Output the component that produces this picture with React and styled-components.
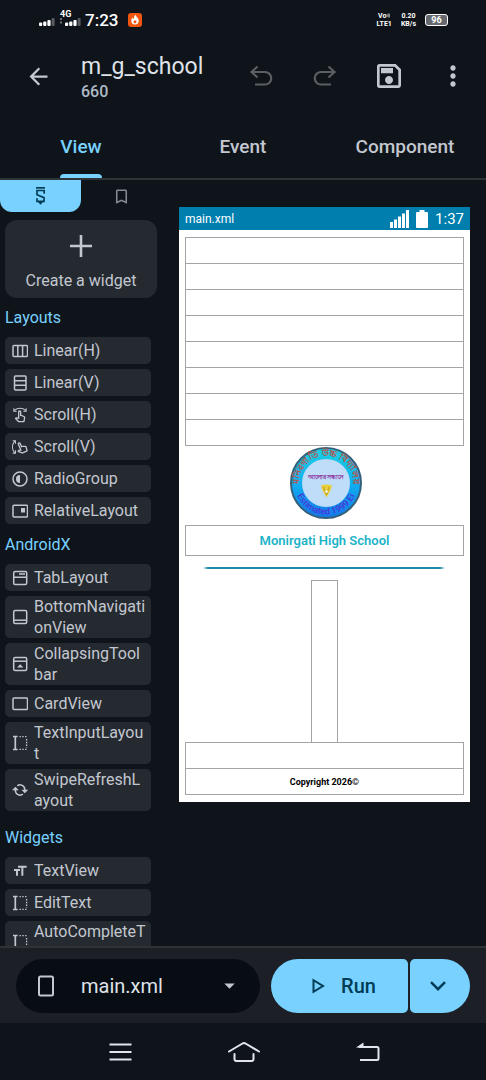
// src/App.jsx
import React, { useState } from 'react';
import styled, { createGlobalStyle, ThemeProvider } from 'styled-components';
import {
  MdArrowBack,
  MdOutlineSave,
  MdMoreVert,
  MdBookmarkBorder,
  MdOutlineSwipe,
  MdOutlineSwipeVertical,
  MdFormatSize,
  MdArrowDropDown,
} from 'react-icons/md';

const theme = {
  background: '#0f141a',
  surface: '#252a31',
  bar: '#1c2026',
  field: '#070d13',
  line: '#2e3338',
  text: '#c3c7cf',
  bright: '#dfe2e8',
  muted: '#5b5f64',
  primary: '#78d1ff',
  onPrimary: '#003c55',
};

const GlobalStyle = createGlobalStyle`
  * {
    box-sizing: border-box;
  }

  body {
    margin: 0;
    background-color: #0f141a;
    font-family: Roboto, 'Liberation Sans', sans-serif;
  }

  button, select {
    font-family: inherit;
    border: none;
    padding: 0;
    margin: 0;
    background: none;
    color: inherit;
    cursor: pointer;
  }

  h1, h2, p {
    margin: 0;
  }

  svg {
    display: block;
    flex-shrink: 0;
  }
`;

const Screen = styled.div`
  display: flex;
  flex-direction: column;
  height: 100vh;
  overflow: hidden;
  background-color: ${({ theme }) => theme.background};
  color: ${({ theme }) => theme.text};
`;

/* Status bar */

const StatusBar = styled.div`
  display: flex;
  align-items: center;
  justify-content: space-between;
  height: 39px;
  padding: 0 38px;
  color: #ffffff;
`;

const StatusGroup = styled.div`
  display: flex;
  align-items: center;
  gap: ${props => props.$gap}px;
`;

const Signals = styled.div`
  display: flex;
  align-items: flex-end;
  gap: 5px;
  padding-bottom: 4px;
`;

const Clock = styled.span`
  margin-right: 6px;
  font-size: 17px;
  font-weight: 500;
`;

const TinyStack = styled.span`
  display: flex;
  flex-direction: column;
  align-items: ${props => props.$align || 'center'};
  font-size: ${props => props.$size || 7}px;
  line-height: 8px;
  font-weight: 700;
`;

const TinyLine = styled.span`
  display: flex;
  align-items: center;
`;

const Battery = styled.span`
  width: 23px;
  height: 12px;
  border: 1px solid #ffffff;
  border-radius: 3px;
  background-color: #66696d;
  font-size: 9px;
  line-height: 10px;
  font-weight: 700;
  text-align: center;
`;

/* App bar */

const AppBar = styled.header`
  display: flex;
  align-items: center;
  height: 74px;
  padding: 0 17px 0 25px;
`;

const TitleBlock = styled.div`
  flex: 1;
  padding: 3px 0 0 29px;
`;

const Title = styled.h1`
  font-size: 23px;
  line-height: 28px;
  font-weight: 400;
  color: ${({ theme }) => theme.bright};
`;

const Subtitle = styled.p`
  font-size: 16px;
  line-height: 22px;
  font-weight: 500;
  color: #aebbc6;
`;

const Actions = styled.div`
  display: flex;
  align-items: center;
  gap: 32px;
`;

const IconButton = styled.button`
  display: flex;
  justify-content: center;
  min-width: ${props => props.$width || 0}px;
  color: ${({ theme, disabled }) => (disabled ? theme.muted : theme.text)};
`;

/* Tabs */

const Tabs = styled.nav`
  display: flex;
  height: 67px;
  border-bottom: 2px solid ${({ theme }) => theme.line};
`;

const Tab = styled.button`
  flex: 1;
  display: flex;
  flex-direction: column;
  align-items: center;
  justify-content: flex-end;
  font-size: 19px;
  line-height: 24px;
  font-weight: 500;
  color: ${({ theme, $active }) => ($active ? theme.primary : theme.text)};

  &::after {
    content: '';
    width: 42px;
    height: 4px;
    margin-top: 15px;
    border-radius: 4px 4px 0 0;
    background-color: ${({ theme, $active }) => ($active ? theme.primary : 'transparent')};
  }
`;

/* Workspace */

const Workspace = styled.main`
  flex: 1;
  display: flex;
  min-height: 0;
`;

const Sidebar = styled.aside`
  flex: 0 0 calc(100% / 3);
  overflow: hidden;
`;

const PaletteTabs = styled.div`
  display: flex;
`;

const PaletteTab = styled.button`
  flex: 1;
  display: flex;
  align-items: center;
  justify-content: center;
  height: 32px;
  border-radius: 0 0 12px 12px;
  background-color: ${({ theme, $active }) => ($active ? theme.primary : 'transparent')};
  color: ${({ theme, $active }) => ($active ? theme.onPrimary : '#858990')};
`;

const CreateButton = styled.button`
  display: flex;
  flex-direction: column;
  align-items: center;
  gap: 14px;
  width: calc(100% - 10px);
  height: 78px;
  margin: 8px 5px 0;
  padding-top: 15px;
  border-radius: 12px;
  background-color: ${({ theme }) => theme.surface};
  font-size: 16px;
  line-height: 20px;
`;

const Section = styled.section`
  display: flex;
  flex-direction: column;
  gap: 5px;
  padding: 0 11px ${props => props.$space}px 5px;
`;

const SectionTitle = styled.h2`
  font-size: 16px;
  line-height: 20px;
  padding: 10px 0 4px;
  font-weight: 400;
  color: ${({ theme }) => theme.primary};
`;

const Item = styled.button`
  display: flex;
  align-items: center;
  gap: 6px;
  min-height: 27px;
  padding: 0 4px 0 7px;
  border-radius: 5px;
  background-color: ${({ theme }) => theme.surface};
  font-size: 16px;
  line-height: 21px;
  text-align: left;
`;

const ItemLabel = styled.span`
  flex: 1;
  word-break: break-all;
`;

/* Layout preview */

const Canvas = styled.div`
  flex: 1;
  padding: 27px 16px 0 17px;
`;

const PreviewBar = styled.div`
  display: flex;
  align-items: center;
  justify-content: space-between;
  height: 23px;
  padding: 0 6px;
  background-color: #007eae;
  color: #ffffff;
  font-size: 12px;
`;

const PreviewClock = styled.span`
  font-size: 15px;
`;

const PreviewBody = styled.div`
  display: flex;
  flex-direction: column;
  align-items: center;
  padding: 7px 6px;
  background-color: #ffffff;
`;

const Cell = styled.div`
  display: flex;
  align-items: center;
  justify-content: center;
  width: ${props => props.$width || '100%'};
  height: ${props => props.$height || 27}px;
  border: 1px solid #a3a3a8;

  & + & {
    margin-top: -1px;
  }
`;

const Crest = styled.div`
  padding: 0 0 5px 4px;
`;

const SchoolName = styled.p`
  font-size: 13px;
  font-weight: 600;
  color: #1cb3c8;
`;

const Divider = styled.div`
  width: 242px;
  height: 2px;
  margin: 11px 0;
  background: linear-gradient(to right, transparent, #1c8ba8 2%, #1c8ba8 98%, transparent);
`;

const Copyright = styled.p`
  font-size: 9px;
  font-weight: 700;
  color: #000000;
`;

/* Bottom bar */

const BottomBar = styled.footer`
  display: flex;
  align-items: center;
  height: 77px;
  padding: 0 16px;
  border-top: 2px solid ${({ theme }) => theme.line};
  background-color: ${({ theme }) => theme.bar};
`;

const FilePicker = styled.label`
  flex: 1;
  display: flex;
  align-items: center;
  height: 54px;
  margin-right: 11px;
  padding: 0 18px 0 22px;
  border-radius: 27px;
  background-color: ${({ theme }) => theme.field};
`;

const FileSelect = styled.select`
  flex: 1;
  min-width: 0;
  margin-left: 27px;
  appearance: none;
  outline: none;
  font-size: 20px;
  color: ${({ theme }) => theme.bright};
`;

const RunButton = styled.button`
  display: flex;
  align-items: center;
  justify-content: center;
  gap: 16px;
  width: 137px;
  height: 54px;
  padding-left: 9px;
  border-radius: 27px 5px 5px 27px;
  background-color: ${({ theme }) => theme.primary};
  color: ${({ theme }) => theme.onPrimary};
  font-size: 20px;
  font-weight: 500;
`;

const MoreButton = styled(RunButton)`
  width: 60px;
  margin-left: 2px;
  padding: 0 4px 0 0;
  border-radius: 5px 27px 27px 5px;
`;

const SystemNav = styled.nav`
  display: flex;
  align-items: center;
  justify-content: space-between;
  height: 57px;
  padding: 0 106px 0 109px;

  button {
    color: #e2e5ee;
  }
`;

/* Icons */

const Stroke = ({ size = 16, width = 1.5, box = 16, children }) => (
  <svg
    width={size}
    height={size}
    viewBox={`0 0 ${box} ${box}`}
    fill="none"
    stroke="currentColor"
    strokeWidth={width}
  >
    {children}
  </svg>
);

const LinearHIcon = () => (
  <Stroke>
    <rect x="1" y="2.5" width="14.5" height="11" rx="1" />
    <path d="M5.8 2.5v11M10.6 2.5v11" />
  </Stroke>
);

const LinearVIcon = () => (
  <Stroke>
    <rect x="2.5" y="1" width="11.5" height="14" rx="1" />
    <path d="M2.5 5.7h11.5M2.5 10.3h11.5" />
  </Stroke>
);

const RadioIcon = () => (
  <Stroke>
    <circle cx="8" cy="8" r="7" />
    <path d="M8 4a4 4 0 0 0 0 8z" fill="currentColor" stroke="none" />
  </Stroke>
);

const RelativeIcon = () => (
  <Stroke>
    <rect x="1" y="2.2" width="14.5" height="11.8" rx="1" />
    <rect x="9" y="5" width="4" height="4.500" fill="currentColor" stroke="none" />
  </Stroke>
);

const TabIcon = () => (
  <Stroke>
    <rect x="1.7" y="1.5" width="13" height="13" rx="1.5" />
    <path d="M1.7 7.2h13M7 4h6" />
  </Stroke>
);

const BottomNavIcon = () => (
  <Stroke>
    <rect x="1.7" y="1.5" width="13" height="13" rx="1.5" />
    <path d="M1.7 11.2h13" />
  </Stroke>
);

const CollapsingIcon = () => (
  <Stroke>
    <rect x="1.7" y="1.5" width="13" height="13" rx="1.5" />
    <path d="M1.7 5.2h13" />
    <path d="M5 11.5L8.2 8.2l3.2 3.3z" fill="currentColor" stroke="none" />
  </Stroke>
);

const CardIcon = () => (
  <Stroke>
    <rect x="1" y="2" width="14.5" height="11.5" rx="1" />
  </Stroke>
);

const InputIcon = () => (
  <Stroke width={1.3}>
    <path d="M1 1.500h4.600M1 14.500h4.600" />
    <path d="M3.300 1.500v13" strokeWidth="1.700" />
    <path d="M7.500 1.700h8M7.500 14.300h8M14.600 4v9" strokeDasharray="1.400 1.400" />
  </Stroke>
);

const RefreshIcon = () => (
  <Stroke>
    <path d="M3.400 7.500v1a4.700 4.700 0 0 0 7.500 3.700M12.800 8.500v-1a4.700 4.700 0 0 0-7.500-3.700" />
    <path d="M0 8.200L3.400 4.800l3.400 3.400zM9.400 7.800l3.400 3.400 3.400-3.400z" fill="currentColor" stroke="none" />
  </Stroke>
);

const UndoIcon = () => (
  <Stroke size={26} box={26} width={2.2}>
    <path d="M9.500 3.500L3.500 9l6 5.500M3.500 9H17a5.800 5.800 0 0 1 0 12.500H7" />
  </Stroke>
);

const RedoIcon = () => (
  <Stroke size={26} box={26} width={2.2}>
    <path d="M16.500 3.500l6 5.500-6 5.500M22.500 9H9a5.800 5.800 0 0 0 0 12.500h10" />
  </Stroke>
);

const LogoIcon = () => (
  <svg width="9" height="18" viewBox="0 0 27 54" fill="none" stroke="currentColor" strokeWidth="5">
    <path d="M0 2.500h27" />
    <path d="M24.500 20V10.500H3V23L24 32V43H3V34" />
    <path d="M6 45h15l-7.500 8z" fill="currentColor" stroke="none" />
  </svg>
);

const PlusIcon = () => (
  <Stroke size={22} box={22} width={2.6}>
    <path d="M11 0v22M0 11h22" />
  </Stroke>
);

const SignalIcon = ({ dots }) => (
  <svg width={dots ? 21 : 17} height="8" viewBox={dots ? '-4 0 21 8' : '0 0 17 8'} fill="#ffffff">
    {dots && <path d="M-4 0h2v2h-2zM-4 3.500h2v2h-2z" opacity="0.4" />}
    <rect x="1" y="4.500" width="3.200" height="3.500" rx="1" />
    <rect x="5.200" y="3.500" width="3.200" height="4.500" rx="1" />
    <rect x="9.400" y="2" width="3.200" height="6" rx="1" />
    <rect x="13.600" y="0" width="3" height="8" rx="1" opacity="0.3" />
  </svg>
);

const FlameIcon = () => (
  <svg width="14" height="14" viewBox="0 0 14 14">
    <rect width="14" height="14" rx="3" fill="#f0560f" />
    <path d="M7.500 1.500c0 2 3.200 3.200 3.200 6.300a3.700 3.700 0 0 1-7.400 0c0-1.600.8-2.700 1.700-3.200 0 .8.300 1.300.8 1.600C6 4.500 6.300 2.500 7.500 1.500z" fill="#ffffff" />
    <circle cx="7" cy="8.700" r="1.500" fill="#f0560f" />
  </svg>
);

const WavesIcon = () => (
  <svg width="4" height="7" viewBox="0 0 6 7" fill="none" stroke="#ffffff" strokeWidth="1">
    <path d="M1 2q1.500 1.500 0 3M2.700 1q2 2.500 0 5M4.300.3q2.400 3.200 0 6.400" />
  </svg>
);

const PreviewSignal = () => (
  <svg width="19" height="18" viewBox="0 0 19 18" fill="#ffffff">
    <path d="M0 12h3v6H0zM4 9.500h3V18H4zM8 6.500h3V18H8zM12 3.500h3V18h-3zM16 0h3v18h-3z" />
  </svg>
);

const PreviewBattery = () => (
  <svg width="12" height="18" viewBox="0 0 12 18" fill="#ffffff">
    <path d="M3.500 0h5v2H11a1 1 0 0 1 1 1v14a1 1 0 0 1-1 1H1a1 1 0 0 1-1-1V3a1 1 0 0 1 1-1h2.500z" />
  </svg>
);

const CrestImage = () => (
  <svg width="74" height="74" viewBox="0 0 74 74">
    <defs>
      <linearGradient id="ring" x1="0" y1="0" x2="0" y2="1">
        <stop offset="0" stopColor="#1ad0e2" />
        <stop offset="0.5" stopColor="#10b0f0" />
        <stop offset="1" stopColor="#1478ea" />
      </linearGradient>
      <path id="arcTop" d="M10 37a27 27 0 0 1 54 0" />
      <path id="arcBottom" d="M5.500 37a31.500 31.500 0 0 0 63 0" />
    </defs>
    <circle cx="37" cy="37" r="35" fill="url(#ring)" stroke="#33617c" strokeWidth="2" />
    <circle cx="37" cy="37" r="24" fill="#bfdcf8" />
    <text fontSize="9" fontWeight="700" fill="#b8524c" textAnchor="middle">
      <textPath href="#arcTop" startOffset="50%">মনিরগাতি উচ্চ বিদ্যালয়</textPath>
    </text>
    <text fontSize="9" fontWeight="500" fill="#4a35d8" textAnchor="middle">
      <textPath href="#arcBottom" startOffset="50%">Estimated 1999 Ei</textPath>
    </text>
    <text x="37" y="33" fontSize="6" fontWeight="700" fill="#8a2a9c" textAnchor="middle">আলোর সন্ধানে</text>
    <path d="M32 39.500q5.500-2 11 0l-1.500 5-4 7-4-7z" fill="#e9cf3c" />
    <path d="M34.500 41l3 8 2.500-8" fill="none" stroke="#a98a1b" strokeWidth="0.8" />
    <circle cx="37.500" cy="45.500" r="1.300" fill="#ffffff" />
  </svg>
);

const FileIcon = () => (
  <svg width="16" height="22" viewBox="0 0 16 22" fill="none" stroke="currentColor" strokeWidth="2">
    <rect x="1" y="1.500" width="14" height="19" rx="1.500" />
  </svg>
);

const PlayIcon = () => (
  <svg width="13" height="16" viewBox="0 0 13 16" fill="none" stroke="currentColor" strokeWidth="2">
    <path d="M1.500 2.200v11.600L11 8z" />
  </svg>
);

const ChevronIcon = () => (
  <svg width="16" height="10" viewBox="0 0 16 10" fill="none" stroke="currentColor" strokeWidth="2.500">
    <path d="M1 1.200l7 7 7-7" />
  </svg>
);

const MenuIcon = () => (
  <svg width="23" height="18" viewBox="0 0 23 18" fill="none" stroke="currentColor" strokeWidth="2">
    <path d="M.5 1.500h22M.5 9h22M.5 16.500h22" />
  </svg>
);

const HomeIcon = () => (
  <svg width="32" height="20" viewBox="0 0 32 20" fill="none" stroke="currentColor" strokeWidth="2" strokeLinecap="round" strokeLinejoin="round">
    <path d="M1 9.500L14.500 1.500q1.500-.8 3 0L31 9.500M6.500 12v5q0 2 2 2h15q2 0 2-2v-5" />
  </svg>
);

const ReturnIcon = () => (
  <svg width="24" height="20" viewBox="0 0 24 20" fill="none" stroke="currentColor" strokeWidth="2">
    <path d="M3 5h18q1.500 0 1.500 1.500v10q0 1.500-1.500 1.500H4" />
    <path d="M0 5.500L7.500.5V6z" fill="currentColor" stroke="none" />
  </svg>
);

const sections = [
  {
    title: 'Layouts',
    space: 1,
    items: [
      { label: 'Linear(H)', icon: <LinearHIcon /> },
      { label: 'Linear(V)', icon: <LinearVIcon /> },
      { label: 'Scroll(H)', icon: <MdOutlineSwipe size={16} /> },
      { label: 'Scroll(V)', icon: <MdOutlineSwipeVertical size={16} /> },
      { label: 'RadioGroup', icon: <RadioIcon /> },
      { label: 'RelativeLayout', icon: <RelativeIcon /> },
    ],
  },
  {
    title: 'AndroidX',
    space: 7,
    items: [
      { label: 'TabLayout', icon: <TabIcon /> },
      { label: 'BottomNavigationView', icon: <BottomNavIcon /> },
      { label: 'CollapsingToolbar', icon: <CollapsingIcon /> },
      { label: 'CardView', icon: <CardIcon /> },
      { label: 'TextInputLayout', icon: <InputIcon /> },
      { label: 'SwipeRefreshLayout', icon: <RefreshIcon /> },
    ],
  },
  {
    title: 'Widgets',
    space: 0,
    items: [
      { label: 'TextView', icon: <MdFormatSize size={16} /> },
      { label: 'EditText', icon: <InputIcon /> },
      { label: 'AutoCompleteTextView', icon: <InputIcon /> },
    ],
  },
];

const App = () => {
  const [activeTab, setActiveTab] = useState('View');
  const [palette, setPalette] = useState('widgets');

  return (
    <ThemeProvider theme={theme}>
      <GlobalStyle />
      <Screen>
        <StatusBar>
          <StatusGroup $gap={4}>
            <Signals>
              <SignalIcon />
              <TinyStack $size={9} $align="flex-start">
                4G
                <SignalIcon dots />
              </TinyStack>
            </Signals>
            <Clock>7:23</Clock>
            <FlameIcon />
          </StatusGroup>
          <StatusGroup $gap={9}>
            <TinyStack>
              <TinyLine>Vo<WavesIcon /></TinyLine>
              <TinyLine>LTE1</TinyLine>
            </TinyStack>
            <TinyStack>
              <TinyLine>0.20</TinyLine>
              <TinyLine>KB/s</TinyLine>
            </TinyStack>
            <Battery>96</Battery>
          </StatusGroup>
        </StatusBar>

        <AppBar>
          <IconButton aria-label="Back"><MdArrowBack size={27} /></IconButton>
          <TitleBlock>
            <Title>m_g_school</Title>
            <Subtitle>660</Subtitle>
          </TitleBlock>
          <Actions>
            <IconButton $width={32} aria-label="Undo" disabled><UndoIcon /></IconButton>
            <IconButton $width={32} aria-label="Redo" disabled><RedoIcon /></IconButton>
            <IconButton $width={32} aria-label="Save"><MdOutlineSave size={32} /></IconButton>
            <IconButton $width={32} aria-label="More options"><MdMoreVert size={32} /></IconButton>
          </Actions>
        </AppBar>

        <Tabs>
          {['View', 'Event', 'Component'].map(tab => (
            <Tab key={tab} $active={tab === activeTab} onClick={() => setActiveTab(tab)}>
              {tab}
            </Tab>
          ))}
        </Tabs>

        <Workspace>
          <Sidebar>
            <PaletteTabs>
              <PaletteTab
                aria-label="Widgets"
                $active={palette === 'widgets'}
                onClick={() => setPalette('widgets')}
              >
                <LogoIcon />
              </PaletteTab>
              <PaletteTab
                aria-label="Favorites"
                $active={palette === 'favorites'}
                onClick={() => setPalette('favorites')}
              >
                <MdBookmarkBorder size={19} />
              </PaletteTab>
            </PaletteTabs>
            <CreateButton>
              <PlusIcon />
              Create a widget
            </CreateButton>
            {sections.map(section => (
              <Section key={section.title} $space={section.space}>
                <SectionTitle>{section.title}</SectionTitle>
                {section.items.map(item => (
                  <Item key={item.label}>
                    {item.icon}
                    <ItemLabel>{item.label}</ItemLabel>
                  </Item>
                ))}
              </Section>
            ))}
          </Sidebar>

          <Canvas>
            <PreviewBar>
              <span>main.xml</span>
              <StatusGroup $gap={7}>
                <PreviewSignal />
                <PreviewBattery />
                <PreviewClock>1:37</PreviewClock>
              </StatusGroup>
            </PreviewBar>
            <PreviewBody>
              {Array.from({ length: 8 }, (_, i) => <Cell key={i} />)}
              <Crest><CrestImage /></Crest>
              <Cell $height={31}>
                <SchoolName>Monirgati High School</SchoolName>
              </Cell>
              <Divider />
              <Cell $width="27px" $height={163} />
              <Cell />
              <Cell>
                <Copyright>Copyright 2026©</Copyright>
              </Cell>
            </PreviewBody>
          </Canvas>
        </Workspace>

        <BottomBar>
          <FilePicker>
            <FileIcon />
            <FileSelect aria-label="File" defaultValue="main.xml">
              <option>main.xml</option>
            </FileSelect>
            <MdArrowDropDown size={25} />
          </FilePicker>
          <RunButton>
            <PlayIcon />
            Run
          </RunButton>
          <MoreButton aria-label="Run options"><ChevronIcon /></MoreButton>
        </BottomBar>

        <SystemNav>
          <IconButton aria-label="Recent apps"><MenuIcon /></IconButton>
          <IconButton aria-label="Home"><HomeIcon /></IconButton>
          <IconButton aria-label="Go back"><ReturnIcon /></IconButton>
        </SystemNav>
      </Screen>
    </ThemeProvider>
  );
};

export default App;
